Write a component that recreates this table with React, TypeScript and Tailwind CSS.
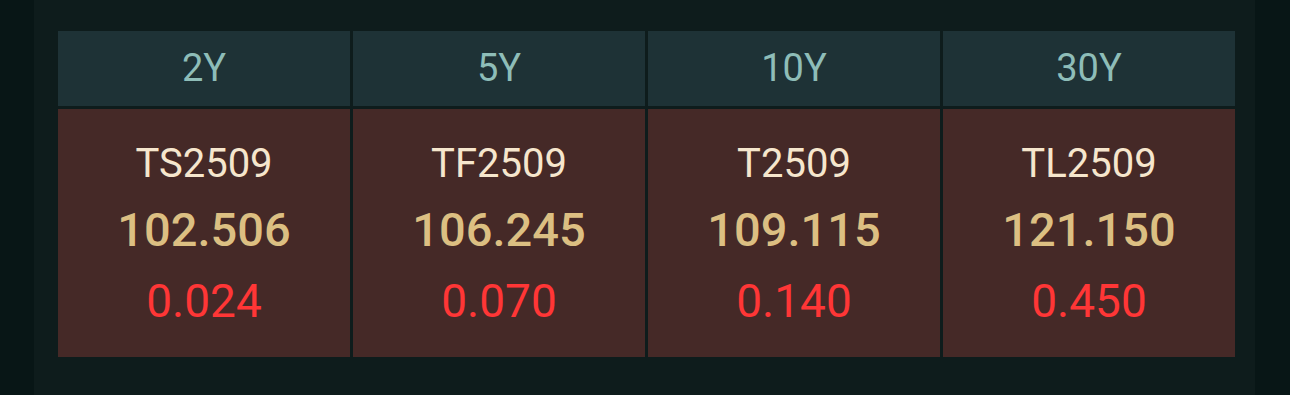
import React from "react";

const items = [
  { tenor: "2Y", code: "TS2509", price: "102.506", change: "0.024" },
  { tenor: "5Y", code: "TF2509", price: "106.245", change: "0.070" },
  { tenor: "10Y", code: "T2509", price: "109.115", change: "0.140" },
  { tenor: "30Y", code: "TL2509", price: "121.150", change: "0.450" },
];

export default function App() {
  return (
    <div
      className="flex h-[395px] w-full bg-[#081616]"
      style={{ fontFamily: "Roboto, 'Noto Sans', sans-serif" }}
    >
      <div className="ml-[34px] h-full w-[1221px] bg-[#0e1c1c] pl-[24px] pr-[20px] pt-[31px]">
        <div className="grid grid-cols-4 gap-x-[3px]">
          {items.map((it) => (
            <div key={it.tenor} className="flex flex-col gap-[3px]">
              <div className="flex h-[75px] items-center justify-center bg-[#1e3236] text-[38px] text-[#8ebdb8]">
                {it.tenor}
              </div>
              <div className="flex h-[248px] flex-col items-center bg-[#452927] pt-[25px]">
                <div className="h-[60px] text-[40px] leading-[60px] text-[#f6e6cd]">
                  {it.code}
                </div>
                <div className="h-[72px] text-[47px] font-medium leading-[72px] text-[#dcbf82]">
                  {it.price}
                </div>
                <div className="h-[71px] text-[46px] leading-[71px] text-[#ff3636]">
                  {it.change}
                </div>
              </div>
            </div>
          ))}
        </div>
      </div>
    </div>
  );
}
